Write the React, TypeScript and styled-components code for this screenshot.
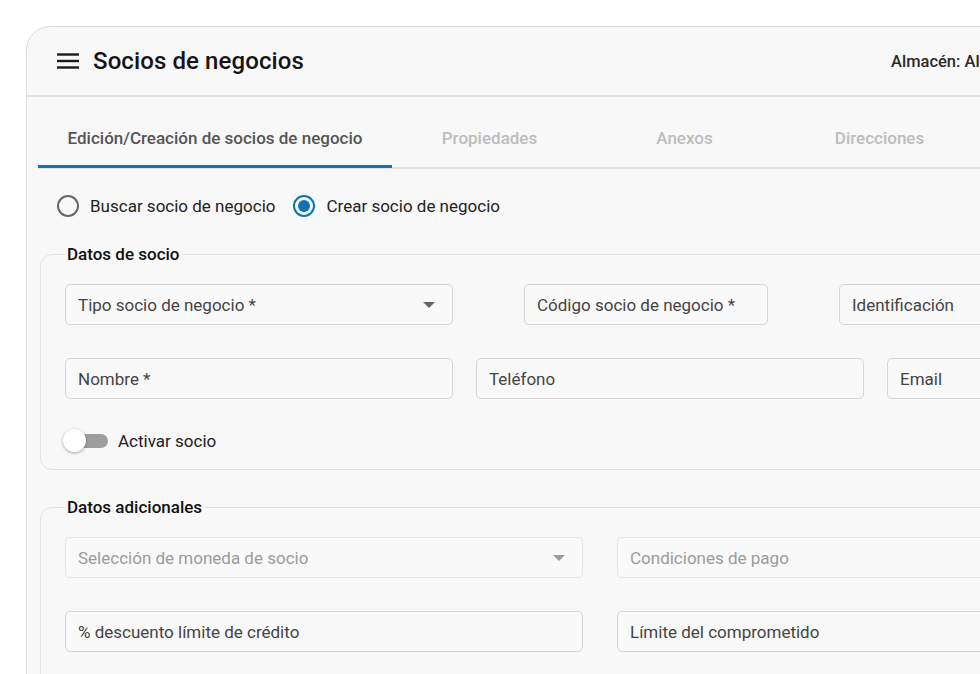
import React from 'react';
import styled, { createGlobalStyle } from 'styled-components';

const GlobalStyle = createGlobalStyle`
  html, body {
    margin: 0;
    padding: 0;
    background: #ffffff;
    overflow: hidden;
  }

  body {
    font-family: Roboto, 'Noto Sans', sans-serif;
    color: #222;
  }
`;

const Page = styled.div`
  padding: 26px 0 0 26px;
  width: 980px;
  height: 674px;
  box-sizing: border-box;
  overflow: hidden;
`;

const Card = styled.div`
  width: 1200px;
  min-height: 720px;
  background: #f8f8f8;
  border: 1px solid #dcdcdc;
  border-top-left-radius: 24px;
  box-sizing: border-box;
`;

const Header = styled.header`
  display: grid;
  grid-template-columns: 834px auto;
  align-items: center;
  height: 68px;
  padding-left: 30px;
  border-bottom: 2px solid #e2e2e2;
`;

const TitleGroup = styled.div`
  display: flex;
  align-items: center;
  gap: 14px;
`;

const Title = styled.h1`
  margin: 0;
  font-size: 24px;
  font-weight: 500;
  color: #141414;
  letter-spacing: 0.1px;
`;

const Warehouse = styled.span`
  font-size: 16.5px;
  font-weight: 500;
  color: #2a2a2a;
  white-space: nowrap;
`;

const Body = styled.div`
  padding: 0 11px;
`;

const Tabs = styled.nav`
  display: flex;
  height: 70px;
  border-bottom: 2px solid #e4e4e4;
`;

const Tab = styled.div<{ $active?: boolean; $width: number }>`
  display: flex;
  align-items: center;
  justify-content: center;
  width: ${(p) => p.$width}px;
  padding-top: 10px;
  box-sizing: border-box;
  font-size: 17px;
  font-weight: 500;
  color: ${(p) => (p.$active ? '#555' : '#bdbdbd')};
  box-shadow: ${(p) => (p.$active ? 'inset 0 -3px 0 #0b74b8' : 'none')};
  margin-bottom: -1px;
`;

const RadioRow = styled.div`
  display: flex;
  align-items: center;
  gap: 18px;
  height: 24px;
  margin: 25px 0 0 19px;
`;

const RadioOption = styled.label`
  display: flex;
  align-items: center;
  gap: 11px;
  font-size: 17px;
  color: #222;
`;

const RadioCircle = styled.span<{ $checked?: boolean }>`
  display: flex;
  align-items: center;
  justify-content: center;
  width: 22px;
  height: 22px;
  box-sizing: border-box;
  border-radius: 50%;
  border: 2px solid ${(p) => (p.$checked ? '#0b74b8' : '#676767')};

  &::after {
    content: '';
    display: ${(p) => (p.$checked ? 'block' : 'none')};
    width: 12px;
    height: 12px;
    border-radius: 50%;
    background: #0b74b8;
  }
`;

const Group = styled.fieldset<{ $top: number; $bottom: number }>`
  margin: ${(p) => p.$top}px 0 0 2px;
  padding: 20px 24px ${(p) => p.$bottom}px;
  border: 1.5px solid #e2e2e2;
  border-radius: 12px;
  min-width: 0;
`;

const Legend = styled.legend`
  padding: 0 2px;
  font-size: 17px;
  font-weight: 500;
  line-height: 20px;
  color: #111;
`;

const FieldRow = styled.div<{ $gap: number; $top?: number }>`
  display: flex;
  gap: ${(p) => p.$gap}px;
  margin-top: ${(p) => p.$top || 0}px;
`;

const Field = styled.div<{ $width: number; $disabled?: boolean }>`
  display: flex;
  align-items: center;
  flex: none;
  width: ${(p) => p.$width}px;
  height: 41px;
  box-sizing: border-box;
  padding: 0 12px;
  border: 1px solid ${(p) => (p.$disabled ? '#e6e6e6' : '#d6d6d6')};
  border-radius: 5px;
  background: #f9f9f9;
  font-size: 17px;
  white-space: nowrap;
  color: ${(p) => (p.$disabled ? '#9b9b9b' : '#444')};
`;

const Caret = styled.span<{ $disabled?: boolean }>`
  margin-left: auto;
  margin-right: 5px;
  width: 0;
  height: 0;
  border-left: 6px solid transparent;
  border-right: 6px solid transparent;
  border-top: 6px solid ${(p) => (p.$disabled ? '#9b9b9b' : '#666')};
`;

const SwitchRow = styled.label`
  display: flex;
  align-items: center;
  gap: 10px;
  height: 24px;
  margin-top: 30px;
  font-size: 17px;
  color: #222;
`;

const Track = styled.span`
  position: relative;
  display: block;
  width: 42px;
  height: 14px;
  margin-left: 1px;
  border-radius: 7px;
  background: #9e9e9e;
`;

const Thumb = styled.span`
  position: absolute;
  top: -5px;
  left: -3px;
  width: 23px;
  height: 23px;
  border-radius: 50%;
  background: #fff;
  box-shadow: 0 1px 3px rgba(0, 0, 0, 0.35);
`;

const MenuIcon = () => (
  <svg width="22" height="16" viewBox="0 0 22 16" aria-hidden>
    <g stroke="#1a1a1a" strokeWidth="2.4" strokeLinecap="butt">
      <line x1="0" y1="1.5" x2="22" y2="1.5" />
      <line x1="0" y1="8" x2="22" y2="8" />
      <line x1="0" y1="14.5" x2="22" y2="14.5" />
    </g>
  </svg>
);

const tabs = [
  { label: 'Edición/Creación de socios de negocio', width: 354, active: true },
  { label: 'Propiedades', width: 195 },
  { label: 'Anexos', width: 195 },
  { label: 'Direcciones', width: 195 },
];

const App: React.FC = () => (
  <>
    <GlobalStyle />
    <Page>
      <Card>
        <Header>
          <TitleGroup>
            <MenuIcon />
            <Title>Socios de negocios</Title>
          </TitleGroup>
          <Warehouse>Almacén: Almacén principal</Warehouse>
        </Header>

        <Body>
          <Tabs>
            {tabs.map((t) => (
              <Tab key={t.label} $width={t.width} $active={t.active}>
                {t.label}
              </Tab>
            ))}
          </Tabs>

          <RadioRow>
            <RadioOption>
              <RadioCircle />
              Buscar socio de negocio
            </RadioOption>
            <RadioOption>
              <RadioCircle $checked />
              Crear socio de negocio
            </RadioOption>
          </RadioRow>

          <Group $top={26} $bottom={16}>
            <Legend>Datos de socio</Legend>
            <FieldRow $gap={71}>
              <Field $width={388}>
                Tipo socio de negocio *
                <Caret />
              </Field>
              <Field $width={244}>Código socio de negocio *</Field>
              <Field $width={300}>Identificación</Field>
            </FieldRow>
            <FieldRow $gap={23} $top={33}>
              <Field $width={388}>Nombre *</Field>
              <Field $width={388}>Teléfono</Field>
              <Field $width={300}>Email</Field>
            </FieldRow>
            <SwitchRow>
              <Track>
                <Thumb />
              </Track>
              Activar socio
            </SwitchRow>
          </Group>

          <Group $top={27} $bottom={40}>
            <Legend>Datos adicionales</Legend>
            <FieldRow $gap={34}>
              <Field $width={518} $disabled>
                Selección de moneda de socio
                <Caret $disabled />
              </Field>
              <Field $width={518} $disabled>
                Condiciones de pago
              </Field>
            </FieldRow>
            <FieldRow $gap={34} $top={33}>
              <Field $width={518}>% descuento límite de crédito</Field>
              <Field $width={518}>Límite del comprometido</Field>
            </FieldRow>
          </Group>
        </Body>
      </Card>
    </Page>
  </>
);

export default App;
